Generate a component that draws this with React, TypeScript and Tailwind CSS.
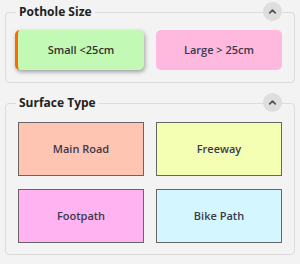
import { useState } from 'react';

const surfaces = [
  { label: 'Main Road', bg: 'bg-[#ffc5b3]' },
  { label: 'Freeway', bg: 'bg-[#f5ffb3]' },
  { label: 'Footpath', bg: 'bg-[#ffb3f0]' },
  { label: 'Bike Path', bg: 'bg-[#d4f7ff]' },
];

function Chevron() {
  return (
    <button className="absolute right-[12px] top-[-18px] w-[19px] h-[19px] rounded-full bg-[#dedede] flex items-center justify-center">
      <svg width="11" height="11" viewBox="0 0 10 10" fill="none" stroke="#555" strokeWidth={1.6} strokeLinecap="round" strokeLinejoin="round">
        <path d="M2.5 6.2L5 3.7l2.5 2.5" />
      </svg>
    </button>
  );
}

export default function App() {
  const [size, setSize] = useState('small');

  return (
    <div className="w-[300px] h-[264px] bg-[#f3f3f3] px-[5px] pt-[4px] font-['Open_Sans',sans-serif] text-[#333]">
      {/* Pothole size */}
      <fieldset className="relative border border-[#dcdcdc] rounded-[4px] pb-[12px]">
        <legend className="ml-[10px] px-[3px] text-[12px] leading-[16px] font-bold text-[#222]">Pothole Size</legend>
        <Chevron />
        <div className="grid grid-cols-2 gap-[12px] mt-[10px] px-[9px]">
          <button
            onClick={() => setSize('small')}
            className={size === 'small'
              ? 'h-[40px] rounded-[5px] bg-[#c2f9b4] border-l-[3px] border-[#ff6a00] shadow-[1px_2px_4px_rgba(0,0,0,0.35)] text-[11px] font-semibold text-[#333]'
              : 'h-[40px] mx-[3px] rounded-[5px] bg-[#c2f9b4] text-[11px] font-semibold text-[#333]'}
          >
            Small &lt;25cm
          </button>
          <button
            onClick={() => setSize('large')}
            className={size === 'large'
              ? 'h-[40px] rounded-[5px] bg-[#ffb9df] border-l-[3px] border-[#ff6a00] shadow-[1px_2px_4px_rgba(0,0,0,0.35)] text-[11px] font-semibold text-[#333]'
              : 'h-[40px] mr-[3px] rounded-[5px] bg-[#ffb9df] text-[11px] font-semibold text-[#3a3a4a]'}
          >
            Large &gt; 25cm
          </button>
        </div>
      </fieldset>

      {/* Surface type */}
      <fieldset className="relative mt-[12px] border border-[#dcdcdc] rounded-[4px] pb-[11px]">
        <legend className="ml-[10px] px-[3px] text-[12px] leading-[16px] font-bold text-[#222]">Surface Type</legend>
        <Chevron />
        <div className="grid grid-cols-2 gap-x-[12px] gap-y-[13px] mt-[11px] px-[12px]">
          {surfaces.map(s => (
            <button key={s.label} className={`h-[54px] border border-[#666] ${s.bg} text-[11px] font-semibold text-[#3a3a4a]`}>
              {s.label}
            </button>
          ))}
        </div>
      </fieldset>
    </div>
  );
}
